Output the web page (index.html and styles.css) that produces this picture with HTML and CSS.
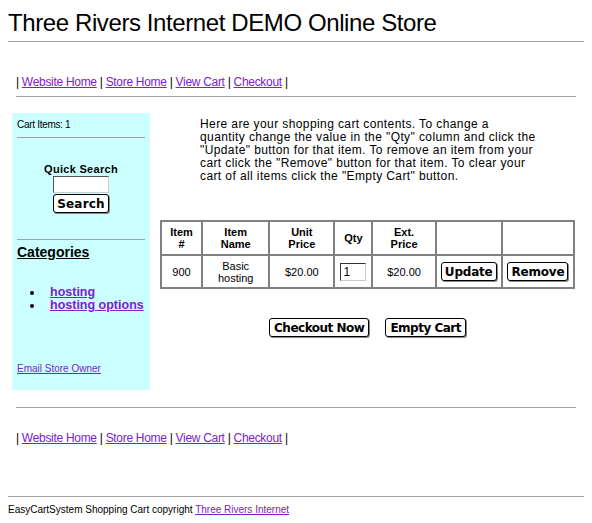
FILE: index.html
```html
<!DOCTYPE html>
<html>
<head>
<meta charset="utf-8">
<title>Three Rivers Internet DEMO Online Store</title>
<link rel="stylesheet" href="styles.css">
</head>
<body>
<h1 class="title">Three Rivers Internet DEMO Online Store</h1>
<hr class="rule rule-full">
<div class="inner">
  <p class="nav nav-top">| <a href="#">Website Home</a> | <a href="#">Store Home</a> | <a href="#">View Cart</a> | <a href="#">Checkout</a> |</p>
  <hr class="rule">
</div>
<div class="layout">
  <aside class="sidebar">
    <div class="cart-items">Cart Items: 1</div>
    <hr class="rule side-rule">
    <form class="search">
      <div class="search-label">Quick Search</div>
      <input class="search-input" type="text">
      <button class="btn btn-search" type="button">Search</button>
    </form>
    <hr class="rule side-rule side-rule-2">
    <div class="cat-title">Categories</div>
    <ul class="cat-list">
      <li><a href="#">hosting</a></li>
      <li><a href="#">hosting options</a></li>
    </ul>
    <a class="email" href="#">Email Store Owner</a>
  </aside>
  <main class="main">
    <p class="intro">Here are your shopping cart contents. To change a quantity change the value in the "Qty" column and click the "Update" button for that item. To remove an item from your cart click the "Remove" button for that item. To clear your cart of all items click the "Empty Cart" button.</p>
    <table class="cart">
      <tr>
        <th class="c1">Item<br>#</th>
        <th class="c2">Item<br>Name</th>
        <th class="c3">Unit<br>Price</th>
        <th class="c4">Qty</th>
        <th class="c5">Ext.<br>Price</th>
        <th class="c6"></th>
        <th class="c7"></th>
      </tr>
      <tr>
        <td>900</td>
        <td>Basic<br>hosting</td>
        <td>$20.00</td>
        <td><input class="qty" type="text" value="1"></td>
        <td>$20.00</td>
        <td><button class="btn" type="button">Update</button></td>
        <td><button class="btn" type="button">Remove</button></td>
      </tr>
    </table>
    <div class="actions">
      <button class="btn btn-big" type="button">Checkout Now</button>
      <button class="btn btn-big" type="button">Empty Cart</button>
    </div>
  </main>
</div>
<div class="inner">
  <hr class="rule rule-bottom">
  <p class="nav nav-bottom">| <a href="#">Website Home</a> | <a href="#">Store Home</a> | <a href="#">View Cart</a> | <a href="#">Checkout</a> |</p>
</div>
<hr class="rule rule-full rule-footer">
<p class="footer">EasyCartSystem Shopping Cart copyright <a href="#">Three Rivers Internet</a></p>
</body>
</html>
```

FILE: styles.css
```css
html, body {
  background: #ffffff;
}
body {
  margin: 8px;
  font-family: "Liberation Sans", Arial, sans-serif;
  color: #000;
}
a {
  color: #7b22cc;
}
.title {
  margin: 0;
  padding-top: 1px;
  font-size: 24px;
  font-weight: normal;
  line-height: 28px;
  letter-spacing: -0.4px;
}
.rule {
  border: 0;
  border-top: 1px solid #a0a0a0;
  height: 0;
  margin: 0;
}
.rule-full {
  margin-top: 4px;
  margin-left: -1px;
}
.inner {
  padding: 0 8px;
}
.nav {
  margin: 0;
  font-size: 12px;
  line-height: 14px;
  letter-spacing: -0.3px;
}
.nav-top {
  padding-top: 33px;
  padding-bottom: 7px;
}
.layout {
  display: flex;
  align-items: flex-start;
  margin-top: 16px;
  padding-left: 4px;
}
.sidebar {
  width: 128px;
  height: 265px;
  background: #ccffff;
  padding: 6px 5px 6px 5px;
  font-size: 10px;
  display: flex;
  flex-direction: column;
}
.cart-items {
  line-height: 12px;
  letter-spacing: -0.3px;
}
.side-rule {
  margin-top: 6px;
}
.search {
  display: flex;
  flex-direction: column;
  align-items: center;
  margin-top: 24px;
}
.search-label {
  font-weight: bold;
  font-size: 11px;
  line-height: 14px;
  letter-spacing: 0.3px;
}
.search-input {
  width: 56px;
  height: 17px;
  box-sizing: border-box;
  border: 1px solid #555;
  border-right-color: #ccc;
  border-bottom-color: #ccc;
  background: #fff;
  padding: 0;
  margin-left: 0;
}
.btn {
  font-family: "DejaVu Sans", "Liberation Sans", sans-serif;
  font-weight: bold;
  font-size: 12px;
  line-height: 14px;
  background: #fff;
  color: #000;
  border: 1px solid #000;
  border-radius: 3px;
  box-shadow: 1px 1px 0 #888;
  padding: 2px 3px 1px 3px;
  letter-spacing: -0.2px;
}
.btn-search {
  margin-top: 1px;
  margin-left: 0;
  letter-spacing: 0.2px;
  padding: 2px 3px 1px 3px;
}
.side-rule-2 {
  margin-top: 26px;
}
.cat-title {
  margin-top: 4px;
  font-size: 14px;
  line-height: 16px;
  font-weight: bold;
  text-decoration: underline;
}
.cat-list {
  margin: 26px 0 0 0;
  padding-left: 27px;
  font-size: 12.5px;
  line-height: 13px;
  font-weight: bold;
}
.cat-list li {
  list-style: disc;
  padding-left: 6px;
}
.email {
  margin-top: auto;
  margin-bottom: 9px;
  line-height: 12px;
}
.main {
  margin-left: 10px;
  width: 415px;
}
.intro {
  margin: 5px 0 0 0;
  width: 336px;
  padding-left: 40px;
  font-size: 12px;
  line-height: 13px;
  letter-spacing: 0.4px;
}
.cart {
  margin-top: 37px;
  width: 415px;
  border: 1px solid #808080;
  border-spacing: 0;
  font-size: 11px;
}
.cart th, .cart td {
  border: 1px solid #808080;
  text-align: center;
  padding: 0;
  line-height: 12px;
}
.cart th {
  height: 32px;
  font-weight: bold;
}
.cart td {
  height: 31px;
}
.c1 { width: 39px; }
.c2 { width: 65px; }
.c3 { width: 63px; }
.c4 { width: 36px; }
.c5 { width: 61px; }
.c6 { width: 64px; }
.c7 { width: 70px; }
.qty {
  width: 26px;
  height: 18px;
  box-sizing: border-box;
  border: 1px solid #333;
  border-right-color: #ccc;
  border-bottom-color: #ccc;
  padding: 0 2px;
  font-size: 12px;
  font-family: "Liberation Sans", Arial, sans-serif;
}
.actions {
  display: flex;
  justify-content: center;
  gap: 16px;
  margin-top: 29px;
}
.btn-big {
  padding: 2px 4px 1px 4px;
  letter-spacing: -0.5px;
}
.rule-bottom {
  margin-top: 17px;
}
.nav-bottom {
  padding-top: 23px;
}
.rule-footer {
  margin-top: 51px;
}
.footer {
  margin: 7px 0 0 0;
  font-size: 10px;
  line-height: 12px;
}
```
